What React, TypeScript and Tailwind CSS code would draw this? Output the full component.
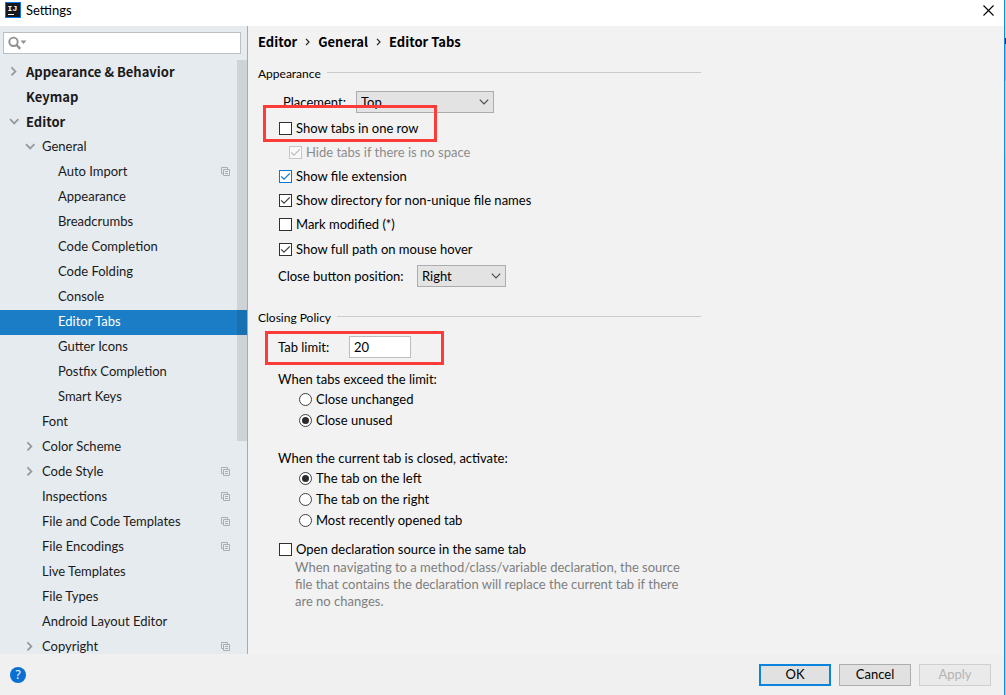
import { useState, type ReactNode } from "react";

type Node = {
  label: string;
  level: 0 | 1 | 2;
  arrow?: "open" | "closed";
  project?: boolean;
};

const nodes: Node[] = [
  { label: "Appearance & Behavior", level: 0, arrow: "closed" },
  { label: "Keymap", level: 0 },
  { label: "Editor", level: 0, arrow: "open" },
  { label: "General", level: 1, arrow: "open" },
  { label: "Auto Import", level: 2, project: true },
  { label: "Appearance", level: 2 },
  { label: "Breadcrumbs", level: 2 },
  { label: "Code Completion", level: 2 },
  { label: "Code Folding", level: 2 },
  { label: "Console", level: 2 },
  { label: "Editor Tabs", level: 2 },
  { label: "Gutter Icons", level: 2 },
  { label: "Postfix Completion", level: 2 },
  { label: "Smart Keys", level: 2 },
  { label: "Font", level: 1 },
  { label: "Color Scheme", level: 1, arrow: "closed" },
  { label: "Code Style", level: 1, arrow: "closed", project: true },
  { label: "Inspections", level: 1, project: true },
  { label: "File and Code Templates", level: 1, project: true },
  { label: "File Encodings", level: 1, project: true },
  { label: "Live Templates", level: 1 },
  { label: "File Types", level: 1 },
  { label: "Android Layout Editor", level: 1 },
  { label: "Copyright", level: 1, arrow: "closed", project: true },
];

const indent = { 0: "pl-2", 1: "pl-6", 2: "pl-10" };

function Arrow({ state }: { state?: "open" | "closed" }) {
  return (
    <svg viewBox="0 0 12 12" className="mr-1.5 h-3 w-3 shrink-0" fill="none" stroke="#949a9f" strokeWidth="1.8" aria-hidden="true">
      {state === "open" && <path d="M2 4.2l4.2 4.2 4.2-4.2" />}
      {state === "closed" && <path d="M3.4 2.4l4 4-4 4" />}
    </svg>
  );
}

function ProjectIcon() {
  return (
    <svg viewBox="0 0 9 9" className="ml-auto h-[9px] w-[9px] shrink-0" fill="none" stroke="#a5b0b6" aria-hidden="true">
      <path d="M2.5 6.5h-2v-6h6v2M2.5 2.5h6v6h-6zM4 4.5h3M4 6.5h3" />
    </svg>
  );
}

function Logo() {
  return (
    <svg viewBox="0 0 16 16" className="h-4 w-4" aria-hidden="true">
      <rect width="16" height="16" fill="#0b74ee" />
      <rect x="1" y="1" width="14" height="14" fill="#16181c" />
      <text x="2.6" y="9" fill="#fff" fontSize="8" fontWeight="700" fontFamily="Liberation Mono, monospace">IJ</text>
      <rect x="3" y="12" width="6" height="1" fill="#fff" />
    </svg>
  );
}

function Select({ id, options, width }: { id: string; options: string[]; width: string }) {
  return (
    <span className={`grid h-[22px] items-center ${width}`}>
      <select id={id} className="col-start-1 row-start-1 h-[22px] w-full appearance-none border border-[#acacac] bg-[#e3e3e3] pl-1 pr-5">
        {options.map((o) => (
          <option key={o}>{o}</option>
        ))}
      </select>
      <svg viewBox="0 0 10 6" className="pointer-events-none col-start-1 row-start-1 mr-[5px] h-1.5 w-2.5 justify-self-end" fill="none" stroke="#4a4a4a" strokeWidth="1.2" aria-hidden="true">
        <path d="M.8.6L5 4.8 9.2.6" />
      </svg>
    </span>
  );
}

function Check({ label, checked = false, disabled = false, accent = false, row = "h-6" }: { label: string; checked?: boolean; disabled?: boolean; accent?: boolean; row?: string }) {
  const border = disabled ? "border-[#c6c6c6]" : accent ? "border-[#0a78d6]" : "border-[#303030]";
  const stroke = disabled ? "stroke-[#bdbdbd]" : accent ? "stroke-[#0a78d6]" : "stroke-[#404040]";
  return (
    <label className={`flex items-center gap-1 ${row} ${disabled ? "ml-[31px] text-[#8c8c8c]" : "ml-[21px]"}`}>
      <span className="grid h-[13px] w-[13px]">
        <input type="checkbox" defaultChecked={checked} disabled={disabled} className={`peer col-start-1 row-start-1 h-[13px] w-[13px] appearance-none border bg-white disabled:bg-[#f8f8f8] ${border}`} />
        <svg viewBox="0 0 13 13" className={`pointer-events-none invisible col-start-1 row-start-1 h-[13px] w-[13px] peer-checked:visible ${stroke}`} fill="none" strokeWidth="1.3" aria-hidden="true">
          <path d="M2.2 6.4L5 9.2l5.8-5.8" />
        </svg>
      </span>
      {label}
    </label>
  );
}

function Radio({ name, label, checked = false }: { name: string; label: string; checked?: boolean }) {
  return (
    <label className="ml-[41px] flex h-[21px] items-center gap-1">
      <span className="grid h-[13px] w-[13px] place-items-center">
        <input type="radio" name={name} defaultChecked={checked} className="peer col-start-1 row-start-1 h-[13px] w-[13px] appearance-none rounded-full border border-[#404040] bg-white" />
        <span className="pointer-events-none invisible col-start-1 row-start-1 h-[7px] w-[7px] rounded-full bg-[#2b2b2b] peer-checked:visible" />
      </span>
      {label}
    </label>
  );
}

function Heading({ children }: { children: ReactNode }) {
  return (
    <h2 className="flex h-[18px] items-center gap-1.5 text-[12px] after:mb-px after:h-px after:flex-1 after:bg-[#cbcbcb]">
      {children}
    </h2>
  );
}

export default function App() {
  const [selected, setSelected] = useState("Editor Tabs");
  return (
    <div className="flex h-screen overflow-hidden font-['Lato','Noto_Sans',sans-serif] text-[13px] leading-[17px] text-black">
      <div className="flex min-w-0 flex-1 flex-col border-r border-[#1b87dc] bg-[#f0f0f0]">
        <header className="flex h-[26px] shrink-0 items-start bg-white pl-[5px] pr-2.5 pt-0.5">
          <Logo />
          <h1 className="ml-[5px] flex-1">Settings</h1>
          <button type="button" aria-label="Close" className="mt-[3px]">
            <svg viewBox="0 0 11 11" className="h-[11px] w-[11px]" stroke="#000" strokeWidth="1.1">
              <path d="M.5.5l10 10M10.5.5l-10 10" />
            </svg>
          </button>
        </header>

        <div className="flex min-h-0 flex-1">
          <aside className="relative flex w-62 shrink-0 flex-col border-r border-[#a8abad] bg-[#e6ebef] pt-1.5">
            <div className="ml-[3px] mr-1.5 flex h-[22px] shrink-0 items-center border border-[#bcbfc1] bg-white pl-1">
              <svg viewBox="0 0 19 14" className="h-3.5 w-[19px] shrink-0" fill="none" stroke="#8f8f8f" aria-hidden="true">
                <circle cx="5.5" cy="5.8" r="4.2" strokeWidth="1.9" />
                <path d="M8.6 9l3.6 3.8" strokeWidth="2.4" />
                <path d="M12.6 4.6h5.8l-2.9 3.4z" fill="#8f8f8f" stroke="none" />
              </svg>
              <input type="search" aria-label="Search settings" className="min-w-0 flex-1 bg-transparent outline-none" />
            </div>
            <ul className="mt-1.5 min-h-0 flex-1 overflow-hidden">
              {nodes.map((n) => (
                <li key={n.label + n.level}>
                  <button
                    type="button"
                    onClick={() => setSelected(n.label)}
                    className={`flex h-[25px] w-full items-center pb-[3px] pr-[17px] text-left ${indent[n.level]} ${n.level === 0 ? "font-['Noto_Sans_CJK_SC','Noto_Sans',sans-serif] font-bold" : ""} ${n.label === selected ? "bg-[#1b7dc5] text-white" : "text-[#1a1a1a]"}`}
                  >
                    <Arrow state={n.arrow} />
                    {n.label}
                    {n.project && <ProjectIcon />}
                  </button>
                </li>
              ))}
            </ul>
            <div className="pointer-events-none absolute right-0 top-[34px] h-[381px] w-2.5 bg-black/10" />
          </aside>

          <main className="min-w-0 flex-1 overflow-hidden bg-[#f2f2f2] pl-2.5 pr-4">
            <nav aria-label="Breadcrumb" className="flex h-8 items-center pb-px font-['Noto_Sans_CJK_SC','Noto_Sans',sans-serif] font-bold">
              <a href="#editor">Editor</a>
              <svg viewBox="0 0 5 8" className="mx-2 h-2 w-[5px]" fill="none" stroke="#222" strokeWidth="1.2" aria-hidden="true"><path d="M1 .8L4 4 1 7.2" /></svg>
              <a href="#general">General</a>
              <svg viewBox="0 0 5 8" className="mx-2 h-2 w-[5px]" fill="none" stroke="#222" strokeWidth="1.2" aria-hidden="true"><path d="M1 .8L4 4 1 7.2" /></svg>
              <a href="#editor-tabs">Editor Tabs</a>
            </nav>

            <div className="max-w-[443px]">
              <section className="pt-1.5">
                <Heading>Appearance</Heading>
                <div className="mt-[9px] flex items-center pl-[25px]">
                  <label htmlFor="placement" className="w-[73px]">Placement:</label>
                  <Select id="placement" options={["Top", "Bottom", "Left", "Right", "None"]} width="w-[138px]" />
                </div>
                <div className="relative mt-[3px]">
                  <Check label="Show tabs in one row" />
                  <div className="pointer-events-none absolute -top-[11px] left-[5px] h-[37px] w-[174px] border-3 border-[#fd3b39]" />
                </div>
                <Check label="Hide tabs if there is no space" checked disabled />
                <Check label="Show file extension" checked accent />
                <Check label="Show directory for non-unique file names" checked />
                <Check label="Mark modified (*)" row="h-[25px]" />
                <Check label="Show full path on mouse hover" checked />
                <div className="mt-1 flex items-center pl-5">
                  <label htmlFor="close-button" className="w-[139px]">Close button position:</label>
                  <Select id="close-button" options={["Right", "Left", "None"]} width="w-[89px]" />
                </div>
              </section>

              <section className="pt-[21px]">
                <Heading>Closing Policy</Heading>
                <div className="relative mt-2.5 flex items-center pl-5">
                  <label htmlFor="tab-limit" className="w-[71px]">Tab limit:</label>
                  <input id="tab-limit" type="text" defaultValue="20" className="h-[22px] w-[62px] border border-[#bdbdbd] bg-white px-1" />
                  <div className="pointer-events-none absolute -top-[5px] left-[7px] h-[34px] w-[179px] border-3 border-[#fd3b39]" />
                </div>

                <fieldset className="mt-[11px]">
                  <legend className="h-5 pl-5 leading-5">When tabs exceed the limit:</legend>
                  <Radio name="exceed" label="Close unchanged" />
                  <Radio name="exceed" label="Close unused" checked />
                </fieldset>

                <fieldset className="mt-[17px]">
                  <legend className="h-5 pl-5 leading-5">When the current tab is closed, activate:</legend>
                  <Radio name="activate" label="The tab on the left" checked />
                  <Radio name="activate" label="The tab on the right" />
                  <Radio name="activate" label="Most recently opened tab" />
                </fieldset>

                <div className="mt-2">
                  <Check label="Open declaration source in the same tab" row="h-5" />
                  <p className="pl-[37px] text-[#7e7e7e]">
                    When navigating to a method/class/variable declaration, the source
                    <br />
                    file that contains the declaration will replace the current tab if there
                    <br />
                    are no changes.
                  </p>
                </div>
              </section>
            </div>
          </main>
        </div>

        <footer className="flex h-[41px] shrink-0 items-center gap-2 pl-2.5 pr-[13px]">
          <button type="button" aria-label="Help" className="mr-auto h-4 w-4 rounded-full bg-[#0770d2] text-center font-['Noto_Sans'] text-[12px] leading-4 text-white">
            ?
          </button>
          <button type="button" className="h-[22px] w-18 border-2 border-[#0b84dd] bg-[#e1e1e1]">OK</button>
          <button type="button" className="h-[22px] w-18 border border-[#adadad] bg-[#e1e1e1]">Cancel</button>
          <button type="button" disabled className="h-[22px] w-18 border border-[#cfcfcf] bg-[#eaeaea] text-[#b4b4b4]">Apply</button>
        </footer>
      </div>
      <div className="w-px shrink-0 bg-[linear-gradient(#c9dcef_0_38px,#20204a_38px_44px,#a9b8a0_44px_80px,#c3d2e0_81px_152px,#aac8e6_160px)]" />
    </div>
  );
}
